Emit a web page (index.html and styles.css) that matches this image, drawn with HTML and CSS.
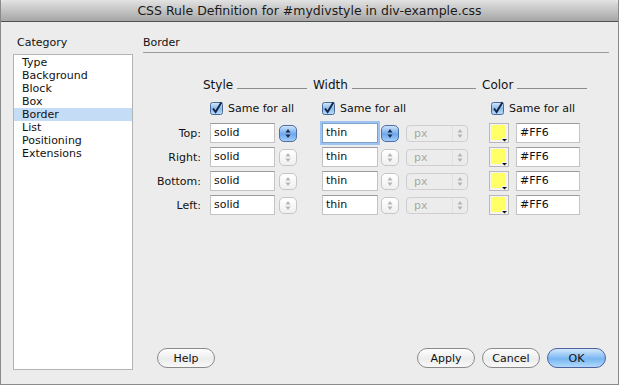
FILE: index.html
```html
<!DOCTYPE html>
<html lang="en">
<head>
  <meta charset="UTF-8">
  <meta name="viewport" content="width=device-width, initial-scale=1.0">
  <title>CSS Rule Definition</title>
  <link rel="stylesheet" href="styles.css">
</head>
<body>
  <div class="window">
    <div class="titlebar">CSS Rule Definition for #mydivstyle in div-example.css</div>

    <div class="dialog">
      <div class="sidebar">
        <div class="caption">Category</div>
        <ul class="category-list">
          <li>Type</li>
          <li>Background</li>
          <li>Block</li>
          <li>Box</li>
          <li class="selected">Border</li>
          <li>List</li>
          <li>Positioning</li>
          <li>Extensions</li>
        </ul>
      </div>

      <div class="main">
        <div class="panel-title">Border</div>

        <!-- group headers -->
        <div class="row head-row">
          <div></div>
          <div class="group-head style-col"><span>Style</span><i class="rule"></i></div>
          <div class="group-head width-col"><span>Width</span><i class="rule"></i></div>
          <div class="group-head color-col"><span>Color</span><i class="rule"></i></div>
        </div>

        <div class="row check-row">
          <div></div>
          <label class="same"><span class="checkbox"></span>Same for all</label>
          <label class="same"><span class="checkbox"></span>Same for all</label>
          <label class="same"><span class="checkbox"></span>Same for all</label>
        </div>

        <div id="side-rows"></div>

        <div class="buttons">
          <button class="btn">Help</button>
          <span class="spacer"></span>
          <button class="btn">Apply</button>
          <button class="btn">Cancel</button>
          <button class="btn default">OK</button>
        </div>
      </div>
    </div>
  </div>

  <script>
    const sides = ['Top', 'Right', 'Bottom', 'Left'];
    const sideRows = document.getElementById('side-rows');

    const checkSvg = `
      <svg width="14" height="14" viewBox="0 0 14 14">
        <defs>
          <linearGradient id="cbg" x1="0" y1="0" x2="0" y2="1">
            <stop offset="0" stop-color="#d4e7fa"/>
            <stop offset="0.5" stop-color="#8cbcec"/>
            <stop offset="1" stop-color="#b8dafa"/>
          </linearGradient>
        </defs>
        <rect x="0.5" y="1.5" width="12" height="12" rx="2" fill="url(#cbg)" stroke="#4c6a99"/>
        <path d="M3 7.5 L5.6 11 L11.5 1.2" fill="none" stroke="#182848" stroke-width="2"/>
      </svg>`;
    document.querySelectorAll('.checkbox').forEach(el => el.innerHTML = checkSvg);

    function stepper(active) {
      const c = active ? '#1e2c44' : '#b4b4b4';
      return `<span class="stepper${active ? ' active' : ''}">
        <svg width="8" height="11" viewBox="0 0 8 11">
          <path d="M4 1 L6.5 4.5 L1.5 4.5 Z" fill="${c}"/>
          <path d="M4 10 L6.5 6.5 L1.5 6.5 Z" fill="${c}"/>
        </svg>
      </span>`;
    }

    const swatch = `
      <span class="swatch">
        <svg width="20" height="20" viewBox="0 0 20 20">
          <rect x="2" y="2" width="15" height="15" fill="#ffff66"/>
          <rect x="12" y="15" width="7" height="4" fill="#f4f4f4"/>
          <path d="M13 16 L18 16 L15.5 18.5 Z" fill="#111"/>
        </svg>
      </span>`;

    // Render one row per side
    sides.forEach((side, i) => {
      const first = i === 0;
      const row = document.createElement('div');
      row.className = 'row field-row';
      row.innerHTML = `
        <div class="side-label">${side}:</div>
        <div class="cell style-cell">
          <span class="field style-field">solid</span>
          ${stepper(first)}
        </div>
        <div class="cell width-cell">
          <span class="field width-field${first ? ' focused' : ''}">thin</span>
          ${stepper(first)}
          <span class="unit">px<b><svg width="6" height="11" viewBox="0 0 6 11">
            <path d="M3 1 L5.5 4.5 L0.5 4.5 Z" fill="#b4b4b4"/>
            <path d="M3 10 L5.5 6.5 L0.5 6.5 Z" fill="#b4b4b4"/>
          </svg></b></span>
        </div>
        <div class="cell color-cell">
          ${swatch}
          <span class="field color-field">#FF6</span>
        </div>`;
      sideRows.appendChild(row);
    });
  </script>
</body>
</html>
```

FILE: styles.css
```css
* {
  box-sizing: border-box;
}
body {
  margin: 0;
  background: #fff;
  font-family: 'DejaVu Sans', sans-serif;
  font-size: 11px;
  color: #111;
}
.window {
  width: 619px;
  height: 385px;
  background: #ececec;
  border: 1px solid #8a8a8a;
  border-top: none;
  display: flex;
  flex-direction: column;
}
.titlebar {
  height: 22px;
  line-height: 21px;
  text-align: center;
  font-size: 12.5px;
  color: #1a1a1a;
  background: linear-gradient(#e2e2e2, #a6a6a6);
  border-bottom: 1px solid #505050;
  border-radius: 4px 4px 0 0;
}
.dialog {
  flex: 1;
  display: flex;
  padding: 14px 9px 14px 12px;
  gap: 10px;
}
.sidebar {
  width: 120px;
  display: flex;
  flex-direction: column;
}
.caption {
  line-height: 13px;
  padding-left: 4px;
  margin-bottom: 5px;
}
.category-list {
  flex: 1;
  list-style: none;
  margin: 0;
  padding: 1px 0 0;
  background: #fff;
  border: 1px solid #b4b4b4;
}
.category-list li {
  line-height: 13px;
  padding-left: 8px;
}
.category-list li.selected {
  background: #c5dcf6;
}
.main {
  flex: 1;
  display: flex;
  flex-direction: column;
}
.panel-title {
  line-height: 13px;
  padding-bottom: 3px;
  border-bottom: 1px solid #9a9a9a;
}
.row {
  display: grid;
  grid-template-columns: 58px 112px 169px 127px;
  align-items: center;
}
.head-row {
  margin-top: 25px;
  height: 14px;
  font-size: 12px;
}
.group-head {
  display: flex;
  align-items: center;
  gap: 4px;
}
.group-head .rule {
  flex: 1;
  height: 1px;
  margin-top: 7px;
  background: #8c8c8c;
}
.style-col { padding-left: 2px; padding-right: 6px; }
.width-col { padding-right: 6px; }
.color-col { padding-right: 22px; }
.check-row {
  margin-top: 9px;
  height: 14px;
}
.same {
  display: flex;
  align-items: center;
  gap: 4px;
  padding-left: 9px;
}
.checkbox {
  display: flex;
}
#side-rows {
  margin-top: 4px;
}
.field-row {
  margin-top: 4px;
  height: 20px;
}
.side-label {
  text-align: right;
}
.cell {
  display: flex;
  align-items: center;
}
.style-cell { padding-left: 9px; gap: 4px; }
.width-cell { padding-left: 9px; gap: 3px; }
.color-cell { padding-left: 7px; gap: 7px; }
.field {
  height: 20px;
  line-height: 18px;
  padding-left: 3px;
  background: #fff;
  border: 1px solid #c4c4c4;
  border-top-color: #9c9c9c;
}
.style-field { width: 65px; }
.width-field { width: 56px; }
.color-field { width: 64px; }
.field.focused {
  border-color: #7da2ce;
  box-shadow: 0 0 0 2px #9ec4ef;
}
.stepper {
  width: 18px;
  height: 17px;
  display: flex;
  align-items: center;
  justify-content: center;
  border: 1px solid #c6c6c6;
  border-radius: 5px;
  background: linear-gradient(#ffffff, #f0f0f0);
}
.stepper.active {
  border-color: #4e6fa6;
  background: linear-gradient(#cfe3f8, #6aa8ee 55%, #a4cdf7);
}
.unit {
  width: 62px;
  height: 17px;
  margin-left: 4px;
  display: flex;
  align-items: center;
  justify-content: space-between;
  padding-left: 7px;
  color: #a8a8a8;
  border: 1px solid #cfcfcf;
  border-radius: 4px;
}
.unit b {
  display: flex;
  align-items: center;
  justify-content: center;
  width: 15px;
  height: 100%;
  border-left: 1px solid #e0e0e0;
}
.swatch {
  width: 20px;
  height: 20px;
  display: flex;
  background: #f4f4f4;
  border: 1px solid #b8b8b8;
}
.swatch svg {
  margin: -1px;
}
.buttons {
  margin-top: auto;
  margin-bottom: 2px;
  display: flex;
  gap: 7px;
  padding-left: 14px;
  padding-right: 3px;
}
.spacer {
  flex: 1;
}
.btn {
  height: 20px;
  min-width: 58px;
  padding: 0 8px;
  font-family: inherit;
  font-size: 11px;
  color: #111;
  border: 1px solid #8a8a8a;
  border-radius: 10px;
  background: linear-gradient(#ffffff, #ececec 55%, #f8f8f8);
}
.btn.default {
  border-color: #4f61a0;
  background: linear-gradient(#d2e8fc, #78b6f2 55%, #b0dafc);
  min-width: 59px;
}
```
